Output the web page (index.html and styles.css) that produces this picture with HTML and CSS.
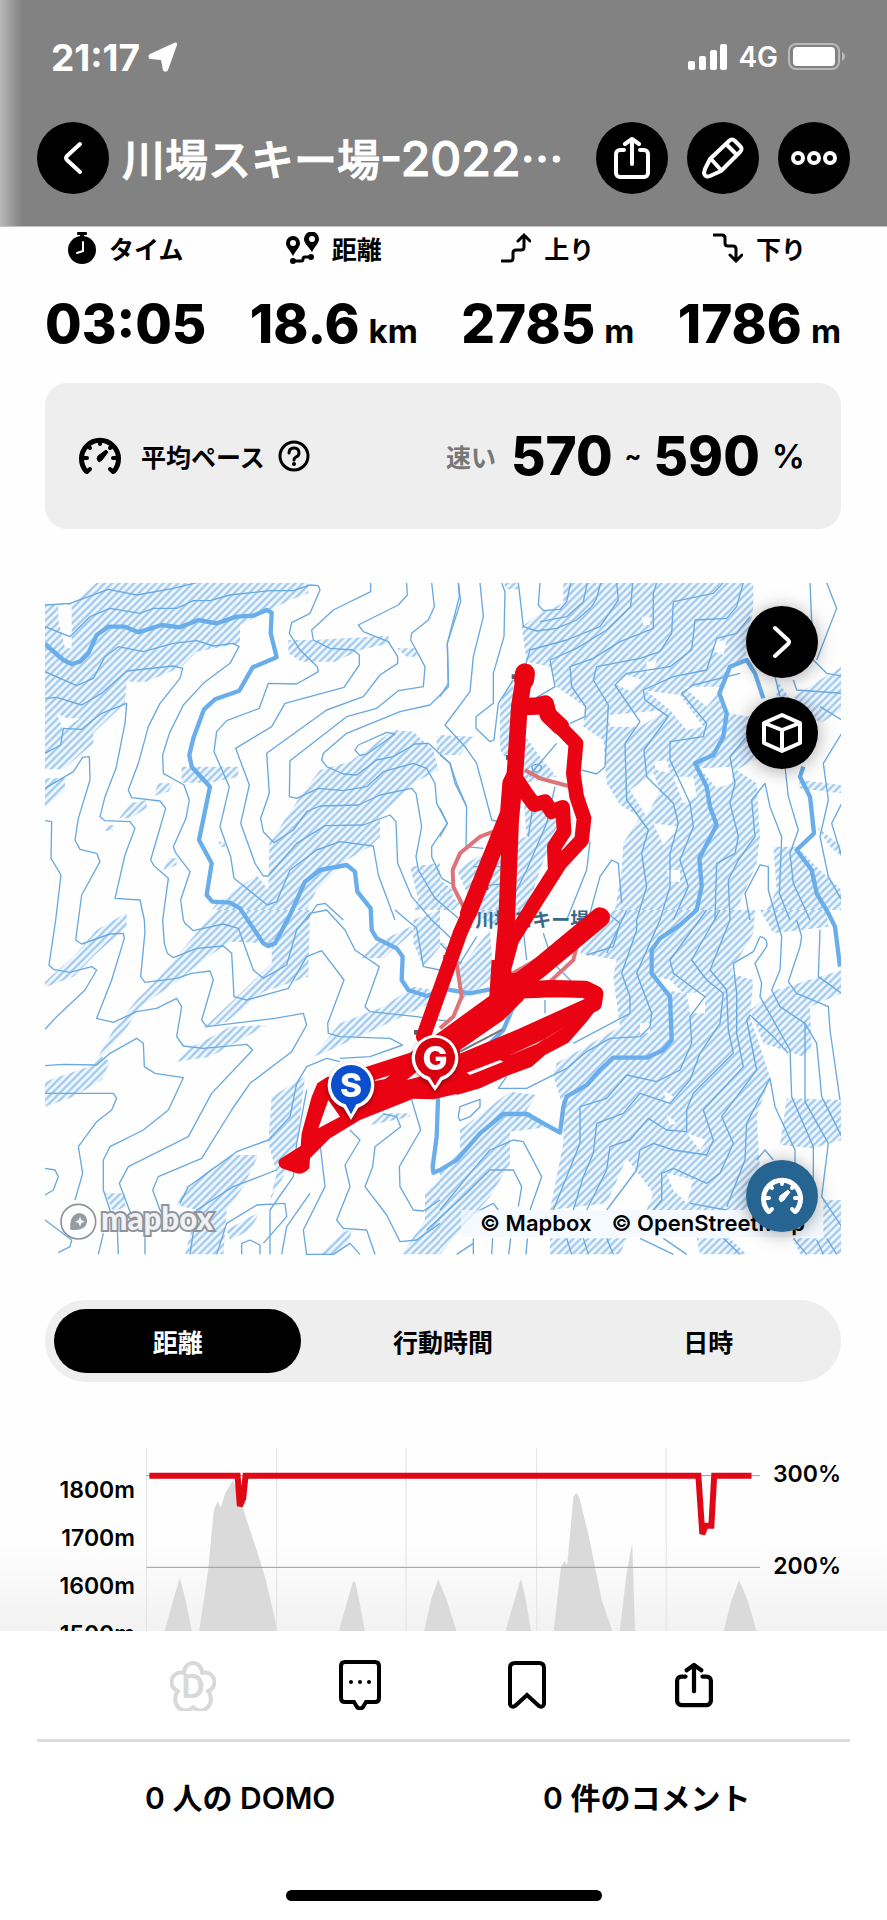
FILE: index.html
```html
<!DOCTYPE html>
<html lang="ja">
<head>
  <meta charset="UTF-8" />
  <meta name="viewport" content="width=device-width, initial-scale=1.0"/>
  <title>川場スキー場</title>
  <link rel="stylesheet" href="styles.css">
</head>
<body>
  <!-- Shared icons -->
  <svg class="sprite" aria-hidden="true">
    <symbol id="icon-share" viewBox="0 0 36 42">
      <g fill="none" stroke="currentColor" stroke-width="4" stroke-linecap="round" stroke-linejoin="round">
        <path d="M10 13H6a4 4 0 0 0-4 4v19a4 4 0 0 0 4 4h24a4 4 0 0 0 4-4V17a4 4 0 0 0-4-4h-4"/>
        <path d="M18 27V3"/>
        <path d="M11 7l7-5 7 5"/>
      </g>
    </symbol>
    <symbol id="icon-gauge" viewBox="0 0 42 38">
      <path d="M8 35A18.500 18.500 0 1 1 34 35" fill="none" stroke="currentColor" stroke-width="5"/>
      <g fill="none" stroke="currentColor" stroke-width="4" stroke-linecap="round">
        <path d="M4 21h4M38 21h-4M21 4v3M10 10l1 1M32 10l-1 1M8 35l3-3M34 35l-3-3"/>
      </g>
      <path d="M18 22l1-3 8-6 2 2-6 8-3 2z" fill="currentColor" stroke="currentColor"/>
    </symbol>
  </svg>

  <div class="page">
    <header class="header">
      <div class="status">
        <span class="clock">21:17</span>
        <svg class="arrow" viewBox="0 0 30 30"><path d="M29 3c.6-2-.8-3-3-2L2 12c-2 1.200-2 4 0 5l11 1 2 10c1 2.500 4 2 5 0z" fill="#fff"/></svg>
        <svg class="signal" viewBox="0 0 40 26">
          <rect x="0" y="17" width="7" height="9" rx="2"/><rect x="11" y="12" width="7" height="14" rx="2"/>
          <rect x="22" y="6" width="7" height="20" rx="2"/><rect x="32" y="0" width="7" height="26" rx="2"/>
        </svg>
        <span class="network">4G</span>
        <svg class="battery" viewBox="0 0 58 28">
          <rect x="1" y="1" width="50" height="25" rx="7" fill="none" stroke="#b9b9b9" stroke-width="2"/>
          <rect x="5" y="4" width="42" height="19" rx="4" fill="#fff"/>
          <path d="M54 9c4 2 4 7 0 9z" fill="#b9b9b9"/>
        </svg>
      </div>
      <div class="nav">
        <button class="round-btn" aria-label="戻る">
          <svg width="20" height="34" viewBox="0 0 20 34"><path d="M17 3L4 15q-2 2 0 4l13 12" fill="none" stroke="currentColor" stroke-width="4" stroke-linecap="round"/></svg>
        </button>
        <h1 class="title">川場スキー場<span class="latin">-2022</span>…</h1>
        <button class="round-btn" aria-label="共有"><svg width="36" height="42"><use href="#icon-share"/></svg></button>
        <button class="round-btn" aria-label="編集">
          <svg width="42" height="42" viewBox="0 0 42 42">
            <g fill="none" stroke="currentColor" stroke-width="4" stroke-linejoin="round">
              <path d="M3 32L8 22 27 4q3-3 6 0l5 5q3 3 0 6L19 34 8 39q-5 2-6-3z"/>
              <path d="M24 7L35 18M9 22L19 33"/>
            </g>
          </svg>
        </button>
        <button class="round-btn" aria-label="メニュー">
          <svg width="46" height="14" viewBox="0 0 46 14"><g fill="none" stroke="currentColor" stroke-width="4"><circle cx="7" cy="7" r="5"/><circle cx="23" cy="7" r="5"/><circle cx="39" cy="7" r="5"/></g></svg>
        </button>
      </div>
    </header>

    <main class="content">
      <dl class="stats">
        <div class="stat">
          <dt>
            <svg class="icon-time" width="28" height="32" viewBox="0 0 28 32">
              <circle cx="14" cy="18" r="14"/><rect x="9" y="0" width="10" height="3" rx="1"/><rect x="12" y="1" width="4" height="5"/>
              <path d="M15 10v9l-6 2" fill="none" stroke="#fff" stroke-width="2" stroke-linecap="round"/>
            </svg>
            タイム
          </dt>
          <dd>03:05</dd>
        </div>
        <div class="stat">
          <dt>
            <svg width="33" height="32" viewBox="0 0 33 32">
              <path fill-rule="evenodd" d="M7 24C3 17 0 15 0 11a7 7 0 0 1 14 0c0 4-3 6-7 13zM7 8a3 3 0 1 0 0 6 3 3 0 0 0 0-6zM26 20c-5-7-8-9-8-13a7 7 0 0 1 15 0c0 4-3 6-7 13zM26 4a3 3 0 1 0 0 6 3 3 0 0 0 0-6z"/>
              <circle cx="7" cy="29" r="3"/><circle cx="25" cy="25" r="3"/>
              <path d="M7 29h8q2 0 2-2t2-2h5" fill="none" stroke="#000" stroke-width="3"/>
            </svg>
            距離
          </dt>
          <dd>18.6<small>km</small></dd>
        </div>
        <div class="stat">
          <dt>
            <svg width="30" height="30" viewBox="0 0 30 30"><path d="M1 28h8q3 0 3-3v-5q0-3 3-3h5q3 0 3-3V2M17 8l6-6 6 6" fill="none" stroke="#000" stroke-width="3" stroke-linecap="round"/></svg>
            上り
          </dt>
          <dd>2785<small>m</small></dd>
        </div>
        <div class="stat">
          <dt>
            <svg width="30" height="30" viewBox="0 0 30 30"><path d="M1 2h8q3 0 3 3v5q0 3 3 3h5q3 0 3 3v12M17 22l6 6 6-6" fill="none" stroke="#000" stroke-width="3" stroke-linecap="round"/></svg>
            下り
          </dt>
          <dd>1786<small>m</small></dd>
        </div>
      </dl>

      <section class="pace">
        <svg width="42" height="38"><use href="#icon-gauge"/></svg>
        <span class="pace-label">平均ペース</span>
        <button class="help" aria-label="ヘルプ">
          <svg width="32" height="32" viewBox="0 0 32 32"><circle cx="16" cy="16" r="14" fill="none" stroke="#000" stroke-width="3"/><path d="M11 13q0-5 5-5t5 5q0 3-3 4-2 1-2 3" fill="none" stroke="#000" stroke-width="3" stroke-linecap="round"/><circle cx="16" cy="24" r="2"/></svg>
        </button>
        <span class="pace-speed">速い</span>
        <span class="pace-value"><b>570</b><i>~</i><b>590</b><em>%</em></span>
      </section>

      <section class="map">
        <svg class="map-canvas" viewBox="0 0 2388 2016" aria-label="地図">
          <defs>
            <pattern id="hatch" width="22" height="22" patternUnits="userSpaceOnUse">
              <rect width="22" height="22" fill="#f1f8fe"/>
              <path d="M-6 6L6-6M0 22L22 0M16 28L28 16" stroke="#a0c9f1" stroke-width="7"/>
            </pattern>
          </defs>

          <!-- Steep slopes -->
          <g class="slope">
            <g transform="translate(-45 -39)">
              <path d="M45 105L125 100 200 38H835V70L780 90 700 130 630 165V220L500 245 455 290 350 335H290L285 400 190 490V520L100 598H45zM85 105V150L105 235H125V105zM80 430L100 480 150 445 110 445z"/>
              <path d="M45 625H105V660L45 712zM455 590H625V620L540 638H455zM385 640H430L415 665 370 678zM300 700L350 690V715L300 745H268zM415 865H440V885L400 900zM230 765H250V782H225zM565 815H585V830H570z"/>
              <path d="M775 210H850L1075 197 1080 220 990 240 915 275H815L775 250zM1100 235H1160V260H1130z"/>
              <path d="M718 820L810 680 870 600 960 575 1090 480 1150 485 1210 540 1225 600 1150 640 1050 740V800L1020 830 950 870 860 960 830 1020H545L560 1000 680 915 715 960z"/>
              <path d="M1140 890L1230 880V930L1270 960 1265 1000 1240 1020H1150L1165 990zM1220 500L1230 495V550L1220 545z"/>
            </g>
            <g transform="translate(1185 -39)">
              <path d="M300 130L370 100V38H940V110L915 270 870 290 840 360 860 430 930 440 960 560 890 600 950 640 960 800 950 880 890 1020H525L545 900 550 820 600 740 540 705 500 640 490 510 430 470 435 410 350 350 330 290 260 275 245 170zM505 435L680 420 600 470H510zM520 340L560 315 610 330 570 362zM730 350H850L800 410zM620 362L720 375 790 470 740 480 690 420zM820 215L860 210 850 255 825 245zM620 275L650 270 640 305 620 310zM570 660L640 610 660 660 620 740zM640 760L720 770 670 825zM780 595L880 590 875 640 830 655zM640 575L680 570 690 610 650 600zM700 620L760 620 770 680 730 700zM680 900L720 900 720 935 690 935zM605 140H630V165H610z"/>
              <path d="M1060 380L1205 290V420L1140 460zM1080 630L1205 645V670L1075 655zM1000 830H1070L1140 900 1205 960V1020H980L1010 960zM1130 770L1205 830V860L1170 830zM1010 330L1060 400 1010 390z"/>
              <path d="M50 900L160 830 260 800 250 680 330 700 370 720 300 900 260 1020H95L100 1010zM180 400L220 320V600L180 540zM250 490L300 560 350 620 250 640zM0 495L100 500 60 555H0zM190 38H235V58H200zM0 955L60 1000 40 1020H0z"/>
            </g>
            <g transform="translate(-45 981)">
              <path d="M45 215L130 140 200 60 290 8V50L200 130 130 200 45 232zM45 515L190 465 250 360 320 270 390 200 540 20 560 0H725V100L600 95 520 150 440 215 330 290 280 370 215 440 240 455 215 510 130 560 45 590z"/>
              <path d="M725 160V0H840L835 200 700 245 590 335 520 355 600 280zM440 455L480 415 600 350 710 345 640 385 540 440zM850 440L930 340 1060 290 1150 230 1210 240 1200 280 1010 370 900 420z"/>
              <path d="M725 560L825 500 800 700 760 800 720 870 740 790 715 700zM470 830L600 735H685L640 830 590 900 580 1033H465L500 900 440 885zM225 850H285V890L250 905zM870 1033L940 965 965 960 960 990 920 1033zM1115 1033L1185 930V850L1230 800V1033zM990 145L1040 100 1140 50 1150 65 1060 145zM1060 610H1140V620L1020 645zM590 960L690 905 660 960 600 990zM1150 30L1230 0V110L1180 170 1150 100z"/>
            </g>
            <g transform="translate(1185 981)">
              <path d="M520 0H945L940 70 870 190 940 210 930 320 990 500 950 620 960 780 920 900H620L640 850 560 745 500 880 330 900 370 700V590L340 500 350 460 540 350 520 200 530 150 420 130 450 60zM740 250L795 245V310H750zM740 670L800 690 780 720zM680 790L760 810 740 880 700 840zM600 340H630V370H600zM650 200L690 210 730 250 680 240zM670 540L700 560 680 580zM680 615L710 640 690 645z"/>
              <path d="M0 780L60 720V660L150 590 210 545 290 555 260 600 330 650 210 665V760L150 860 60 960 0 1033zM330 985H560L540 1033H330zM770 985H870L920 1033H780z"/>
              <path d="M1020 0H1160L1165 50 1000 70 960 0zM1010 240L1205 180V250L1110 290 1115 420 1090 440 970 400 930 300zM1040 565L1205 570V690L1120 715 1020 705zM1150 870H1205V1033H1080L1060 985H1150zM0 90L70 160 150 60 160 200 60 280 50 170zM95 0H260L240 70 150 40z"/>
            </g>
          </g>

          <!-- Contour lines -->
          <g class="contour">
            <g transform="translate(-45 -39)">
              <path d="M45 105L120 100 235 58 320 75 430 55 500 38M45 170L120 200 180 140 240 115 330 130 370 115 440 115 490 92 540 92 600 75 720 62 790 62 840 45 865 47 870 60 840 130 785 158 778 190 810 240 862 290 865 305 800 342 715 340 688 415 590 452 560 485 552 545 598 650 570 770 602 860 612 925 712 1005 740 995 780 900 860 840 930 815 1030 828 1045 915 1095 1050"/>
              <path d="M45 305L140 347 190 325 225 260 265 230 340 245 430 220 500 212 550 228 610 220 627 230 600 280 520 340 460 405 418 490 398 555 400 610 462 645 478 690 468 745 430 830 438 850 480 905 452 990 460 1050"/>
              <path d="M45 385L80 382 155 405 215 370 290 303 430 288 458 295 450 325 390 400 355 470 325 580 295 660 305 683 390 693 407 715 362 870 372 887 415 925 398 1050"/>
              <path d="M45 550L92 525 100 475 155 478 215 430 290 400 285 460 258 595 225 680 210 740 225 752 300 755 315 775 285 855 255 985 330 990 343 1050"/>
              <path d="M45 655L130 605 158 562 178 560 180 630 145 745 135 810 150 838 200 850 210 875 155 975 145 1050M45 752L65 755 63 865 93 915 77 1050"/>
              <path d="M1022 38V65L910 120 845 180 850 210 900 235 970 240 988 255V285L942 352 765 400 725 470 617 535 658 645 632 760 675 880 700 918H715L800 820 885 767 1000 765 1080 735 1098 755 1103 880 1145 980 1205 1050"/>
              <path d="M1130 38L1132 75 1105 105 985 165 1000 185 1075 215 1103 260V280L1050 315 1000 380 890 420 710 550 718 670 692 745 700 785 732 818 790 780 830 725 870 708 985 705 1050 675 1145 655 1158 670 1175 770 1158 860 1165 900 1215 985 1285 1045"/>
              <path d="M1205 38L1213 110 1195 150 1145 190 1142 210 1185 290 1180 350 1105 362 1040 415 950 440 780 572 778 680 800 685 865 655 940 662 1010 650 1060 605 1150 580 1190 595 1215 640 1220 700 1252 760 1205 830V860L1235 925 1265 942"/>
              <path d="M1285 38L1288 80 1252 220 1255 350 1200 405 1110 425 950 490 880 550 875 570 890 590 940 612 980 615 1040 570 1090 560 1155 522 1195 520 1260 580 1275 640 1310 710"/>
              <path d="M975 540L985 525 1070 487 1095 492 1015 550 990 557zM830 1050L860 1005 885 1000 940 1050"/>
            </g>
            <g transform="translate(1185 -39)">
              <path d="M55 38L62 95 22 220 25 340 0 380M120 38L130 140 100 260 90 365 15 465 75 530 110 580 155 750 195 760M185 38L195 65 192 200 160 310V400L108 440V475L150 515 162 510 175 400 220 330M0 555L30 580 50 640 80 710 78 830 130 835M0 715L22 760 0 800"/>
              <path d="M235 38L250 170 290 183 350 175 410 150 455 110 470 85 482 38M300 38L295 105 310 122 360 118 380 95 392 38M442 38L430 95 380 140 300 155M530 38L535 90 480 170 380 210 270 240 258 280M578 38L572 110 500 180 410 235 330 270 345 350 260 400"/>
              <path d="M650 38L640 70V175L540 215 460 265 390 290 395 350 437 410 435 440 390 460M850 38L820 70 700 95 695 190 660 245 600 265 470 290 460 330 505 405 495 590 470 612 425 600"/>
              <path d="M910 38L890 110 860 145 765 150 755 240 690 290 560 310 525 345 600 455 555 520 560 690 625 780 605 850 620 950 590 1050M930 140L890 190 830 205 800 300 700 320 610 360 615 390 685 440 612 540 620 620 700 700 715 760 690 850V950L660 1050"/>
              <path d="M900 310L760 345 725 370 800 460 790 500 690 515V570L750 700 760 770 720 870 745 950 700 1050M920 500L870 560 885 640 870 700 895 800 885 850 830 880 825 1050"/>
              <path d="M1110 38L1120 270 1160 310 1205 318M1160 38L1190 115 1130 270M1060 330L1070 360 1205 370M1140 410L1205 450M1205 490L1150 580 1165 690 1140 800 1165 920 1205 990M1205 700L1175 760 1205 860M1005 320L1020 380"/>
              <path d="M870 1050L865 930 895 870 945 800 935 690 975 640 990 710 1025 800 1018 970 1050 1050M1035 590L1045 680 1075 780 1050 850 1060 940 1110 1050M930 1050L915 970 960 885 985 890 985 960 1010 1050"/>
              <path d="M450 815L440 900 380 1050M450 1030L480 920 515 870 535 880 545 1000M350 520L290 590 270 620M345 650L320 760 260 900 210 1000M265 800L280 700M100 890H190M110 950L200 940M275 590Q290 575 305 590 300 610 280 605z"/>
            </g>
            <g transform="translate(-45 981)">
              <path d="M77 30L57 165 70 178 120 187 185 170 200 180 165 240 80 320 45 358M145 30L137 90 155 102 240 72 280 70 283 85 245 210 200 325 250 337 320 305 380 295 440 265 455 290 440 380 460 408 520 415 650 403 668 420 545 550 475 680 295 770 268 820 300 905 345 960V1033"/>
              <path d="M343 30L345 65 332 200 345 217 440 205 485 190 540 183 550 210 515 330 530 350 735 325 820 310 830 345 785 425 660 520 605 600 515 745 385 800 368 840 390 900 420 940M398 30L403 100 412 130 430 143 500 115 580 108 605 130 612 260 650 270 775 235 830 140 875 122 942 210 893 340 895 370 930 380 1080 385 1118 405 1020 440 930 445"/>
              <path d="M460 30L465 40 490 62 580 42 625 55 670 180 700 205 770 165 800 60 840 10 890 0 945 60 975 120 1048 170 1005 290 1020 305 1160 320 1260 335M1095 0L1160 55 1180 170 1230 180M1205 30L1290 110"/>
              <path d="M45 467L100 463 200 465 240 430 320 385 340 400 343 470 375 490 460 503 415 600 340 660 240 710 220 750V840L240 900 262 960 265 1033M45 550H250L260 565 245 600 200 635 145 710 158 790 135 870M45 775L75 780 85 800 70 840 45 855M45 930L125 990 120 1010 85 1028M205 1033L220 970"/>
              <path d="M930 455L890 445 830 470 800 520 780 620 715 690 620 725 475 830 450 880M740 780L610 830 500 900 480 1033M765 880L680 885 590 940 560 1033M635 1033V1000L660 990 690 1005V1033M870 700L885 830 820 960 830 1033H910L960 1000 990 1033M800 700L790 800 720 900V1033M840 850L770 950 755 1033M830 540L800 700M765 880L770 920 700 1000"/>
              <path d="M960 660L990 690 945 765 960 830 920 930 940 955 1010 960 1035 1033M1060 612L1100 620 1112 650 1035 710 1028 770 1005 830 1070 915 1110 995 1160 990 1230 940M1145 570L1172 660 1108 770 1110 830 1150 900 1180 903 1230 870"/>
            </g>
            <g transform="translate(1185 981)">
              <path d="M590 30V60L545 190 570 260V310L400 400M660 30L590 190 635 310 630 350 600 380 510 385 440 425 380 475 260 535 175 535 200 500M490 0L540 40 520 110 440 135M560 0L500 130"/>
              <path d="M800 0L690 150 700 190 795 260 750 320 755 400 720 480 650 515 560 495 500 565 420 590V700L380 800 340 900M840 0L755 150 800 210 850 250 840 340 780 430 750 510 690 580 600 550 550 610 470 640 460 730 430 800 400 900"/>
              <path d="M870 30L810 180 860 240 865 360 880 430 760 550 740 600V665L680 660 625 625 570 690 510 710 500 780 440 900M960 80L940 125 880 160 890 250V370L910 470 790 600 820 690 800 735 700 720 640 700 600 720 590 780 500 900"/>
              <path d="M1010 30L1025 80 1020 180 995 240 1020 290 1095 340V575L1165 700 1145 860 1205 950M1070 30L1085 80 1080 110 1045 215 1070 250 1165 290 1170 360 1200 570M1140 60L1135 200 1205 250M960 80Q985 85 980 110L945 160 965 220 960 260 1050 420 1055 560 1120 710V850"/>
              <path d="M1045 430L1000 380 930 315 920 330 950 480 845 620 880 700 840 790 800 820 700 775 665 790V870L640 900M1065 760V720L1005 590 990 505 920 640 915 750 860 890M950 750L975 720 1000 750M1095 340L1130 400 1145 560 1205 680M1205 750V840"/>
              <path d="M0 900L90 790 150 720 220 690 250 695 305 800 270 900M-40 960L80 850 150 780 220 780 245 830 235 890M100 910L160 880 175 900M55 620L60 590 120 568V590L90 620 60 632z"/>
              <path d="M50 1033L100 1000M100 985V1033M158 985L155 1033M212 985L206 1033M262 985L258 1033M380 985L395 1033M430 985L445 1033M500 985L520 1033M600 985L700 1033M670 985L740 1033M850 985L900 1033M1130 990L1150 1033M1060 985L1100 1033M1160 985L1190 1033M750 880L860 900"/>
              <path d="M0 100L60 160 110 80M250 60L260 150M310 70L340 160 400 220M315 270V310"/>
            </g>
          </g>

          <!-- Index contours -->
          <g class="contour-main">
            <path transform="translate(-45 -39)" d="M45 222L100 270 125 282 150 275 175 250 200 195 235 170 285 170 325 187 395 165 450 172 505 150 560 160 620 140 670 137 710 120 725 128 722 190 740 262 668 292 628 362 555 388 522 418 490 505 478 555 485 590 540 650 507 810 545 880 530 975 547 995 600 998 630 1015 700 1120 715 1128 735 1120 780 1035 825 935 870 900 950 885 975 905 982 965 1022 1015 1025 1080 1040 1105 1100 1135 1118 1160 1115 1230 1135 1260 1190 1278 1250 1258 1320 1270 1380 1258"/>
            <path transform="translate(1185 -39)" d="M970 385L945 310 920 270 870 290 838 370 860 430 850 500 820 555 765 580 800 650 810 710 830 765 778 865 785 950 770 1020 720 1065 660 1105 635 1140V1210L690 1280 695 1410 670 1440 620 1463H520L480 1500 440 1545 380 1580 370 1610 360 1688 260 1632H190L120 1690 50 1770 0 1800-20 1808-22 1790-10 1700-5 1560M1090 590L1080 620 1110 680 1122 790 1070 840 1115 900 1130 970 1165 1030 1185 1070 1200 1190M220 1310L190 1380 150 1420"/>
          </g>

          <!-- Lifts, pistes and the recorded track -->
          <g transform="translate(1185 -39)">
            <g class="piste">
              <path d="M160 785L120 800 60 850 38 900 40 950 75 1020M255 600L300 625 385 648M415 1110L400 1170 330 1235 250 1250M210 1215L420 1095M50 1180L65 1280 40 1340 0 1375"/>
            </g>
            <text class="place" x="106" y="1070">川場スキー場</text>
            <path class="lift" d="M215 313h12v14h-12zM198 555h12v14h-12zM96 932h12v14h-12zM133 948h12v12h-12zM10 1155h12v14h-12zM378 1140h12v14h-12zM-78 1380h14v14h-14z"/>
            <path d="M60 1445L188 1378" stroke="#777" stroke-width="6"/>
            <g class="track">
              <path stroke-width="60" d="M255 310L252 330"/>
              <path stroke-width="50" d="M252 320L238 410 225 610 212 750 200 1050 180 1270"/>
              <path stroke-width="52" d="M245 410L292 408 316 402 325 435 362 470"/>
              <path stroke-width="44" d="M325 435L408 520 400 610 410 680 432 745 425 810 360 880 290 990 215 1110 180 1240"/>
              <path stroke-width="44" d="M225 620L258 670 283 704 315 695 335 725 368 712 372 785 343 830 345 890"/>
              <path stroke-width="50" d="M222 620L212 640 205 730 85 1030"/>
              <path stroke-width="44" d="M100 1000L60 1090-50 1400"/>
              <path stroke-width="60" d="M480 1042L290 1200 180 1280"/>
              <path stroke-width="52" d="M230 1260L340 1256 435 1258 464 1272 460 1300"/>
            </g>
            <path class="track-fill" fill-rule="evenodd" d="M-385 1580L-368 1540-340 1522-220 1490-90 1448 0 1385 148 1278 155 1170 210 1170 215 1210 290 1200 250 1290 190 1350 60 1440 60 1570-20 1588-80 1586-240 1650-330 1705-390 1765-392 1795Q-410 1815-430 1810L-475 1795Q-492 1780-480 1767L-418 1728-415 1690zM-335 1590L-300 1640-365 1675z"/>
            <path class="track-fill" d="M440 1284L240 1375 50 1455V1575L120 1555 200 1518 275 1490 315 1455 385 1418 440 1355 484 1300 480 1260z"/>
            <path d="M-195 1530L-150 1516-165 1527-195 1533zM-100 1530L-70 1505-60 1520zM80 1508L180 1470 190 1475 90 1515zM200 1460L290 1422 380 1367 320 1405z" fill="#fff"/>
          </g>

          <!-- Start and goal pins -->
          <g class="pin" transform="translate(918 1506)">
            <path d="M0 105L-22 68A70 70 0 1 1 22 68z" fill="#fff"/>
            <path d="M0 88L-16 58A60 60 0 1 1 16 58z" fill="#0b4fcf"/>
            <text y="36">S</text>
          </g>
          <g class="pin" transform="translate(1170 1424)">
            <path d="M0 100L-22 68A70 70 0 1 1 22 68z" fill="#fff"/>
            <path d="M0 84L-16 58A60 60 0 1 1 16 58z" fill="#d7000f"/>
            <text y="36">G</text>
          </g>

          <g class="mapbox" transform="translate(100 1916)">
            <circle r="52"/>
            <path d="M-24 24Q-28-22 4-26 28-22 26 2 20 30-24 24z" fill="#87909b" stroke="none"/>
            <path d="M5-16L9-5 20 0 9 5 5 16 1 5-10 0 1-5z" fill="#fff" stroke="none"/>
            <text x="68" y="24">mapbox</text>
          </g>
        </svg>

        <div class="credits"><a href="#">© Mapbox</a><a href="#">© OpenStreetMap</a></div>
        <div class="map-tools">
          <button class="round-btn" aria-label="次へ">
            <svg width="20" height="34" viewBox="0 0 20 34"><path d="M3 3l13 12q2 2 0 4L3 31" fill="none" stroke="currentColor" stroke-width="4" stroke-linecap="round"/></svg>
          </button>
          <button class="round-btn" aria-label="3D">
            <svg width="42" height="42" viewBox="0 0 42 42"><path d="M21 3L39 11V31L21 39 3 31V11zM3 11L21 18 39 11M21 18V39" fill="none" stroke="currentColor" stroke-width="4" stroke-linejoin="round"/></svg>
          </button>
          <button class="round-btn pace-btn" aria-label="ペース"><svg width="42" height="38"><use href="#icon-gauge"/></svg></button>
        </div>
      </section>

      <div class="tabs">
        <button class="tab active">距離</button>
        <button class="tab">行動時間</button>
        <button class="tab">日時</button>
      </div>

      <section class="chart">
        <div class="elevation"><span>1800m</span><span>1700m</span><span>1600m</span><span>1500m</span></div>
        <svg class="plot" viewBox="258 504 1086 549" preserveAspectRatio="none">
          <path class="hill" d="M291 1053L306 960 318 894 328 960 339 1053zM352 1053L368 870 378 690 385 664 390 684 398 640 412 600 425 660 440 740 452 800 470 900 491 1053zM599 1053L613 970 624 905H628L636 970 645 1053zM750 1053L762 960 775 898 790 960 807 1053zM894 1053L908 970 921 896 930 960 939 1053zM979 1053L992 860 998 843 1003 855 1014 650 1019 638 1024 650 1040 760 1064 960 1083 1053zM1096 1053L1108 880 1118 788 1123 1053zM1280 1053L1292 970 1307 900 1322 960 1338 1053z"/>
          <path class="grid" d="M259 504V1053M489 504V1053M718 504V1053M949 504V1053M1178 504V1053"/>
          <path class="guide" d="M259 587H1344M259 862H1344"/>
          <path class="line" d="M264 587H420L424 678 430 655 434 587H1235L1242 762 1248 737H1258L1263 587H1329"/>
        </svg>
        <div class="percent"><span>300%</span><span>200%</span></div>
      </section>
    </main>

    <footer class="footer">
      <div class="actions">
        <button aria-label="DOMO">
          <svg width="46" height="52" viewBox="0 0 46 52">
            <path d="M14 14A9 10 0 0 1 32 14A9 9 0 0 1 38 32A9 10 0 0 1 23 48A9 10 0 0 1 8 32A9 9 0 0 1 14 14z" fill="none" stroke="#d9d9d9" stroke-width="4" stroke-linejoin="round"/>
            <text class="domo" x="23" y="39">D</text>
          </svg>
        </button>
        <button aria-label="コメント">
          <svg width="42" height="50" viewBox="0 0 42 50"><path d="M6 2H36Q40 2 40 6V38Q40 42 36 42H27L24 47Q21 50 18 47L15 42H6Q2 42 2 38V6Q2 2 6 2z" fill="none" stroke="#000" stroke-width="4"/><circle cx="12" cy="22" r="2"/><circle cx="21" cy="22" r="2"/><circle cx="30" cy="22" r="2"/></svg>
        </button>
        <button aria-label="保存">
          <svg width="38" height="48" viewBox="0 0 38 48"><path d="M7 2H31Q36 2 36 7V43Q35 47 31 45L19 34 7 45Q3 47 2 43V7Q2 2 7 2z" fill="none" stroke="#000" stroke-width="4"/></svg>
        </button>
        <button aria-label="シェア"><svg width="38" height="48"><use href="#icon-share"/></svg></button>
      </div>
      <div class="counts">
        <a href="#">0 人の DOMO</a>
        <a href="#">0 件のコメント</a>
      </div>
      <div class="home-bar"></div>
    </footer>
  </div>
</body>
</html>
```
FILE: styles.css
```css
* {
  box-sizing: border-box;
}

body {
  margin: 0;
  font-family: Inter, "Noto Sans CJK JP", sans-serif;
  background: #fefefe;
  color: #000;
}

button {
  border: none;
  background: none;
  padding: 0;
  font: inherit;
  color: inherit;
  cursor: pointer;
}

a {
  color: inherit;
  text-decoration: none;
}

svg {
  display: block;
  flex: none;
}

.sprite {
  position: absolute;
  width: 0;
  height: 0;
}

.page {
  display: flex;
  flex-direction: column;
  height: 100vh;
}

/* Header */
.header {
  background: linear-gradient(to right, #b8b8b8, #828282 22px);
  color: #fff;
  padding: 36px 37px 31px;
  border-bottom: 1px solid #c4c4c4;
}

.status {
  display: flex;
  align-items: center;
  height: 42px;
  padding: 0 4px 0 14px;
  margin-bottom: 43px;
}

.clock {
  font-size: 37px;
  font-weight: 700;
}

.arrow {
  width: 30px;
  height: 30px;
  margin: 0 auto 0 8px;
}

.signal {
  width: 40px;
  height: 26px;
  fill: #fff;
}

.network {
  font-size: 28px;
  font-weight: 600;
  margin: 0 10px;
}

.battery {
  width: 58px;
  height: 28px;
}

.nav {
  display: flex;
  align-items: center;
  gap: 19px;
}

.round-btn {
  display: flex;
  align-items: center;
  justify-content: center;
  flex: none;
  width: 72px;
  height: 72px;
  border-radius: 50%;
  background: #000;
  color: #fff;
}

.title {
  flex: 1;
  margin: 0 0 0 -6px;
  font-family: "Noto Sans CJK JP", sans-serif;
  font-size: 43px;
  font-weight: 500;
  line-height: 72px;
  white-space: nowrap;
  -webkit-text-stroke: 1px #fff;
}

.title .latin {
  font-family: Inter, sans-serif;
  font-size: 48px;
}

/* Stats */
.content {
  flex: 1;
  min-height: 0;
  overflow: hidden;
  padding: 0 46px 0 45px;
}

.stats {
  display: flex;
  justify-content: space-between;
  margin: 0 0 24px;
}

.stat {
  display: flex;
  flex-direction: column;
  align-items: center;
}

.stat dt {
  display: flex;
  align-items: center;
  gap: 13px;
  height: 42px;
  font-size: 25px;
  font-weight: 700;
}

.stat dd {
  margin: 27px 0 0;
  font-size: 53px;
  font-weight: 800;
  line-height: 56px;
}

.stat small {
  font-size: 33px;
  font-weight: 700;
  margin-left: 9px;
}

/* Pace */
.pace {
  display: flex;
  align-items: center;
  height: 146px;
  padding: 0 36px 0 34px;
  border-radius: 22px;
  background: #eee;
}

.pace-label {
  margin: 0 13px 0 20px;
  font-size: 25px;
  font-weight: 700;
}

.pace-speed {
  margin: 0 15px 0 auto;
  font-size: 25px;
  font-weight: 700;
  color: #777;
}

.pace-value {
  display: flex;
  align-items: center;
  gap: 12px;
}

.pace-value b {
  font-size: 53px;
  font-weight: 800;
}

.pace-value i,
.pace-value em {
  font-size: 33px;
  font-style: normal;
  font-weight: 600;
}

.pace-value i {
  font-size: 25px;
  font-weight: 700;
}

/* Map */
.map {
  position: relative;
  margin-top: 54px;
}

.map-canvas {
  width: 100%;
  height: auto;
}

.slope {
  fill: url(#hatch);
  fill-rule: evenodd;
}

.contour {
  fill: none;
  stroke: #69a9df;
  stroke-width: 4;
  stroke-linejoin: round;
}

.contour-main {
  fill: none;
  stroke: #69aeea;
  stroke-width: 13;
  stroke-linejoin: round;
}

.piste {
  fill: none;
  stroke: #dd7479;
  stroke-width: 12;
}

.lift {
  fill: #5d5d66;
}

.place {
  font-size: 57px;
  font-weight: 700;
  fill: #35698c;
}

.track {
  fill: none;
  stroke: #ea0312;
  stroke-linecap: round;
  stroke-linejoin: round;
}

.track-fill {
  fill: #ea0312;
}

.pin {
  filter: drop-shadow(0 6px 6px rgba(0, 0, 0, 0.4));
}

.pin text {
  font-size: 100px;
  font-weight: 800;
  fill: #fff;
  text-anchor: middle;
}

.mapbox {
  fill: #fff;
  fill-opacity: 0.9;
  stroke: #8f959e;
  stroke-width: 5;
}

.mapbox text {
  font-family: Lato, sans-serif;
  font-size: 94px;
  font-weight: 900;
  paint-order: stroke;
  stroke-width: 12;
}

.credits {
  position: absolute;
  right: 18px;
  bottom: 18px;
  display: flex;
  gap: 20px;
  padding: 0 18px 0 19px;
  font-size: 22px;
  font-weight: 600;
  line-height: 27px;
  background: rgba(240, 248, 255, 0.75);
}

.map-tools {
  position: absolute;
  top: 23px;
  right: 23px;
  bottom: 23px;
  display: flex;
  flex-direction: column;
  gap: 19px;
}

.map-tools .round-btn {
  box-shadow: 0 2px 18px rgba(0, 0, 0, 0.35);
}

.map-tools .pace-btn {
  margin-top: auto;
  background: #266592;
}

/* Tabs */
.tabs {
  display: flex;
  margin-top: 45px;
  border-radius: 41px;
  background: #eee;
}

.tab {
  flex: 1;
  height: 64px;
  margin: 9px;
  border-radius: 32px;
  font-size: 25px;
  font-weight: 700;
}

.tab.active {
  background: #000;
  color: #fff;
}

/* Chart */
.chart {
  display: flex;
  align-items: flex-start;
  margin: 0 -46px 0 -45px;
  padding: 66px 46px 0 45px;
  font-size: 23px;
  font-weight: 600;
  background: linear-gradient(to top, #f2f2f2, #fefefe 90px);
}

.elevation {
  display: flex;
  flex-direction: column;
  width: 101px;
  height: 183px;
  padding: 18px 11px 0 0;
  text-align: right;
  line-height: 48px;
}

.plot {
  flex: 1;
  min-width: 0;
  height: 183px;
}

.plot path {
  vector-effect: non-scaling-stroke;
}

.hill {
  fill: #dadada;
}

.grid {
  stroke: #e2e2e2;
}

.guide {
  stroke: #9a9a9a;
}

.line {
  fill: none;
  stroke: #e00716;
  stroke-width: 6;
}

.percent {
  display: flex;
  flex-direction: column;
  gap: 40px;
  width: 81px;
  text-align: right;
  line-height: 52px;
}

/* Footer */
.footer {
  position: relative;
  padding: 0 37px 19px;
  background: #fff;
}

.actions {
  display: flex;
  padding: 0 72px;
  height: 111px;
  border-bottom: 3px solid #dcdcdc;
}

.actions button {
  flex: 1;
  display: flex;
  align-items: center;
  justify-content: center;
}

.domo {
  font-size: 32px;
  font-weight: 700;
  fill: #d9d9d9;
  text-anchor: middle;
}

.counts {
  display: flex;
  height: 108px;
  font-size: 30px;
  font-weight: 600;
}

.counts a {
  flex: 1;
  display: flex;
  align-items: center;
  justify-content: center;
}

.home-bar {
  width: 316px;
  height: 11px;
  margin: 40px auto 0;
  border-radius: 6px;
  background: #000;
}
```
